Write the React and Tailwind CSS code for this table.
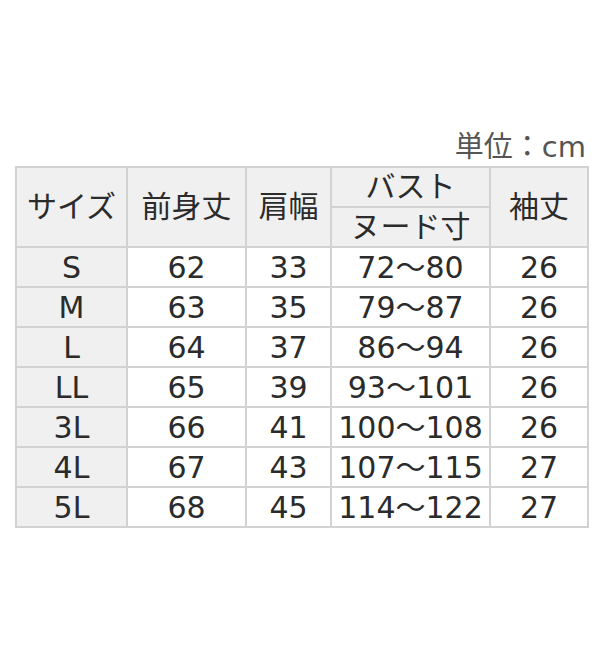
const rows = [
  ['S', '62', '33', '72～80', '26'],
  ['M', '63', '35', '79～87', '26'],
  ['L', '64', '37', '86～94', '26'],
  ['LL', '65', '39', '93～101', '26'],
  ['3L', '66', '41', '100～108', '26'],
  ['4L', '67', '43', '107～115', '27'],
  ['5L', '68', '45', '114～122', '27'],
]

export default function App() {
  const cell = 'border-2 border-[#d2d2d2] text-center align-middle p-0'
  return (
    <div className="w-[600px] h-[660px] bg-white pt-[131px] pl-[15px] text-[#2b2b2b] font-['DejaVu_Sans','Noto_Sans_CJK_JP',sans-serif]">
      <div className="w-[572px] text-right text-[29px] leading-[33px] text-[#555] pr-[1px]">単位：cm</div>
      <table className="mt-[2px] w-[572px] border-collapse table-fixed text-[30px] leading-none">
        <colgroup>
          <col className="w-[111px]" />
          <col className="w-[119px]" />
          <col className="w-[85px]" />
          <col className="w-[159px]" />
          <col className="w-[98px]" />
        </colgroup>
        <thead>
          <tr className="h-[40px] bg-[#f0f0f0]">
            <th rowSpan={2} className={`${cell} font-normal`}>サイズ</th>
            <th rowSpan={2} className={`${cell} font-normal`}>前身丈</th>
            <th rowSpan={2} className={`${cell} font-normal`}>肩幅</th>
            <th className={`${cell} font-normal`}>バスト</th>
            <th rowSpan={2} className={`${cell} font-normal`}>袖丈</th>
          </tr>
          <tr className="h-[40px] bg-[#f0f0f0]">
            <th className={`${cell} font-normal`}>ヌード寸</th>
          </tr>
        </thead>
        <tbody>
          {rows.map(r => (
            <tr key={r[0]} className="h-[40px]">
              <td className={`${cell} bg-[#f0f0f0] pt-[2px]`}>{r[0]}</td>
              <td className={`${cell} pt-[2px]`}>{r[1]}</td>
              <td className={`${cell} pt-[2px]`}>{r[2]}</td>
              <td className={`${cell} pt-[2px]`}>{r[3]}</td>
              <td className={`${cell} pt-[2px]`}>{r[4]}</td>
            </tr>
          ))}
        </tbody>
      </table>
    </div>
  )
}
